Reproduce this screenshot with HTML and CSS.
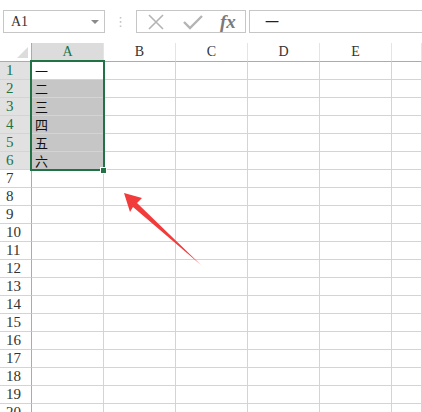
FILE: index.html
```html
<!DOCTYPE html>
<html lang="zh">

<head>
  <meta charset="UTF-8">
  <title>表格</title>
  <link rel="stylesheet" href="styles.css">
</head>

<body>
  <div class="toolbar">
    <div class="namebox">
      <span>A1</span>
      <i class="caret"></i>
    </div>
    <div class="grip">⋮</div>
    <div class="buttons">
      <svg width="20" height="16" viewBox="0 0 20 16">
        <path d="M3 1 L17 15 M17 1 L3 15" stroke="#b4b4b4" stroke-width="1.6" fill="none" />
      </svg>
      <svg width="22" height="16" viewBox="0 0 22 16">
        <path d="M2 8 L8 14 L20 2" stroke="#b4b4b4" stroke-width="2.4" fill="none" />
      </svg>
      <span class="fx">fx</span>
    </div>
    <div class="formula">一</div>
  </div>

  <div class="sheet">
    <div class="grid">
      <div class="corner"><i></i></div>
      <div class="colhead active">A</div>
      <div class="colhead">B</div>
      <div class="colhead">C</div>
      <div class="colhead">D</div>
      <div class="colhead">E</div>
      <div class="colhead"></div>
    </div>
    <div class="rows" id="rows"></div>

    <div class="selection"><i class="handle"></i></div>

    <svg class="arrow" width="422" height="412" viewBox="0 0 422 412">
      <polygon points="124,193 142,198 137,203 201,265 133,207 130,212" fill="#f23b3b" />
    </svg>
  </div>

  <script>
    (function () {
      var data = ['一', '二', '三', '四', '五', '六']
      var oRows = document.getElementById('rows')
      var html = ''
      for (var i = 1; i <= 20; i++) {
        var sel = i <= 6
        html += '<div class="grid">'
        html += '<div class="rowhead' + (sel ? ' active' : '') + '">' + i + '</div>'
        html += '<div class="cell' + (i > 1 && sel ? ' picked' : '') + '">' + (data[i - 1] || '') + '</div>'
        html += '<div class="cell"></div><div class="cell"></div><div class="cell"></div><div class="cell"></div><div class="cell"></div>'
        html += '</div>'
      }
      oRows.innerHTML = html
    }());
  </script>
</body>

</html>
```

FILE: styles.css
```css
* {
  margin: 0;
  padding: 0;
  box-sizing: border-box;
}

body {
  width: 422px;
  height: 412px;
  overflow: hidden;
  background: #fff;
  font-family: "Liberation Serif", "Noto Sans CJK SC", serif;
}

.toolbar {
  display: flex;
  align-items: center;
  height: 43px;
  padding: 10px 0 10px 3px;
}

.namebox {
  display: flex;
  align-items: center;
  justify-content: space-between;
  width: 102px;
  height: 23px;
  padding: 0 5px 0 7px;
  border: 1px solid #c6c6c6;
  font-size: 14px;
  color: #333;
}

.namebox .caret {
  border-left: 4px solid transparent;
  border-right: 4px solid transparent;
  border-top: 4px solid #8a8a8a;
}

.grip {
  width: 31px;
  text-align: center;
  color: #c0c0c0;
  font-family: "DejaVu Sans", sans-serif;
  font-size: 13px;
}

.buttons {
  display: flex;
  align-items: center;
  gap: 16px;
  width: 110px;
  height: 23px;
  padding-left: 9px;
  border: 1px solid #c6c6c6;
}

.buttons .fx {
  font-family: "Liberation Serif", serif;
  font-style: italic;
  font-weight: bold;
  font-size: 19px;
  line-height: 20px;
  color: #7a7a7a;
}

.formula {
  flex: 1;
  height: 23px;
  margin-left: 3px;
  padding-left: 15px;
  border: 1px solid #c6c6c6;
  border-right: 0;
  font-family: "Noto Sans CJK SC", sans-serif;
  font-size: 14px;
  line-height: 20px;
  color: #222;
}

.sheet {
  position: relative;
}

.grid {
  display: grid;
  grid-template-columns: 32px 72px 72px 72px 72px 72px 1fr;
}

.corner,
.colhead {
  height: 19px;
  border-bottom: 1px solid #ababab;
}

.corner {
  position: relative;
  border-right: 1px solid #ababab;
}

.corner i {
  position: absolute;
  right: 3px;
  bottom: 3px;
  border-left: 11px solid transparent;
  border-bottom: 11px solid #dcdcdc;
}

.colhead {
  border-right: 1px solid #e4e4e4;
  text-align: center;
  font-size: 14px;
  line-height: 18px;
  color: #333;
}

.colhead.active {
  background: #dcdcdc;
  color: #217346;
}

.rowhead,
.cell {
  height: 18px;
  border-bottom: 1px solid #d4d4d4;
}

.rowhead {
  border-right: 1px solid #ababab;
  padding-left: 6px;
  font-size: 15px;
  line-height: 17px;
  color: #333;
}

.rowhead.active {
  background: #e1e1e1;
  color: #217346;
}

.cell {
  border-right: 1px solid #d4d4d4;
  padding-left: 3px;
  font-family: "Noto Sans CJK SC", sans-serif;
  font-size: 13px;
  line-height: 17px;
  color: #111;
}

.cell.picked {
  background: #c6c6c6;
}

.selection {
  position: absolute;
  left: 30px;
  top: 17px;
  width: 75px;
  height: 111px;
  border: 2px solid #217346;
}

.selection .handle {
  position: absolute;
  right: -4px;
  bottom: -5px;
  width: 7px;
  height: 7px;
  background: #217346;
  border: 1px solid #fff;
}

.arrow {
  position: absolute;
  left: 0;
  top: -43px;
}
```
